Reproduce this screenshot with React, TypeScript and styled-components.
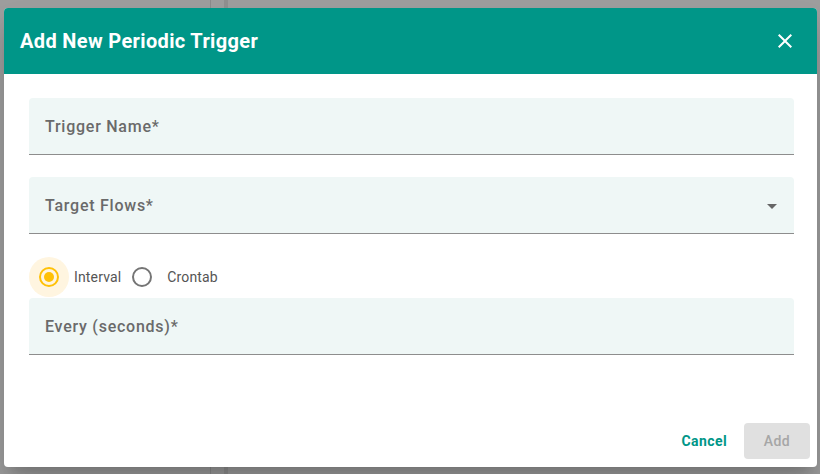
import React from "react";
import styled, { createGlobalStyle } from "styled-components";

const Global = createGlobalStyle`
  html, body { margin: 0; padding: 0; }
  body { font-family: Roboto, "Noto Sans", sans-serif; }
`;

const Page = styled.div`
  width: 820px;
  height: 474px;
  box-sizing: border-box;
  padding: 8px 3px 7px 4px;
  background:
    linear-gradient(to right, transparent 210px, #8c8c8c 210px, #8c8c8c 211px, transparent 211px, transparent 224px, #909090 224px, #909090 228px, transparent 228px),
    #9e9e9e;
  display: flex;
`;

const Dialog = styled.div`
  flex: 1;
  background: #fff;
  border-radius: 4px;
  overflow: hidden;
  display: flex;
  flex-direction: column;
  box-shadow: 0 11px 15px -7px rgba(0,0,0,0.2), 0 24px 38px 3px rgba(0,0,0,0.14);
`;

const Header = styled.div`
  height: 66px;
  flex: none;
  background: #009688;
  display: flex;
  align-items: center;
  justify-content: space-between;
  padding: 0 20px 0 16px;
  color: #fff;
`;

const Title = styled.h2`
  margin: 0;
  font-size: 20px;
  font-weight: 700;
  letter-spacing: 0.35px;
`;

const CloseButton = styled.button`
  border: 0;
  background: none;
  padding: 0;
  width: 24px;
  height: 24px;
  color: #fff;
  display: flex;
  align-items: center;
  justify-content: center;
  cursor: pointer;
`;

const Body = styled.div`
  flex: 1;
  padding: 24px 23px 0 25px;
  display: flex;
  flex-direction: column;
`;

const Field = styled.div<{ $mb?: number }>`
  height: 57px;
  box-sizing: border-box;
  background: #eff7f6;
  border-radius: 4px 4px 0 0;
  border-bottom: 1px solid #8d8d8d;
  display: flex;
  align-items: center;
  justify-content: space-between;
  padding: 0 16px;
  margin-bottom: ${(p) => p.$mb ?? 0}px;
`;

const Label = styled.span`
  font-size: 16px;
  font-weight: 500;
  color: #6a6a6a;
  letter-spacing: 0.75px;
`;

const Caret = styled.span`
  width: 0;
  height: 0;
  border-left: 5px solid transparent;
  border-right: 5px solid transparent;
  border-top: 5px solid #666;
  margin-right: 1px;
  margin-top: 2px;
`;

const RadioRow = styled.div`
  height: 44px;
  display: flex;
  align-items: center;
  margin-top: 21px;
  margin-bottom: -1px;
`;

const RadioItem = styled.label`
  display: flex;
  align-items: center;
  font-size: 14px;
  color: #555;
  letter-spacing: 0.15px;
  margin-right: 1px;
`;

const RadioWrap = styled.span<{ $checked?: boolean }>`
  width: 40px;
  height: 40px;
  border-radius: 50%;
  display: flex;
  align-items: center;
  justify-content: center;
  background: ${(p) => (p.$checked ? "#fff5e0" : "transparent")};
  margin-right: 5px;
`;

const RadioCircle = styled.span<{ $checked?: boolean }>`
  width: 20px;
  height: 20px;
  box-sizing: border-box;
  border-radius: 50%;
  border: 2px solid ${(p) => (p.$checked ? "#ffc107" : "#757575")};
  display: flex;
  align-items: center;
  justify-content: center;
  &::after {
    content: "";
    width: 10px;
    height: 10px;
    border-radius: 50%;
    background: #ffc107;
    display: ${(p) => (p.$checked ? "block" : "none")};
  }
`;

const Footer = styled.div`
  flex: none;
  display: flex;
  justify-content: flex-end;
  align-items: center;
  gap: 17px;
  padding: 0 7px 8px 0;
`;

const TextButton = styled.button`
  border: 0;
  background: none;
  font-family: inherit;
  font-size: 14px;
  font-weight: 700;
  color: #009688;
  padding: 0;
  height: 36px;
  letter-spacing: 0.4px;
`;

const DisabledButton = styled.button`
  border: 0;
  border-radius: 4px;
  background: #e0e0e0;
  color: #a6a6a6;
  font-family: inherit;
  font-size: 14px;
  font-weight: 500;
  width: 66px;
  height: 36px;
  letter-spacing: 0.4px;
`;

export default function App() {
  return (
    <>
      <Global />
      <Page>
        <Dialog>
          <Header>
            <Title>Add New Periodic Trigger</Title>
            <CloseButton aria-label="close">
              <svg width="24" height="24" viewBox="0 0 24 24" fill="currentColor">
                <path d="M19 6.41 17.59 5 12 10.59 6.41 5 5 6.41 10.59 12 5 17.59 6.41 19 12 13.41 17.59 19 19 17.59 13.41 12z" />
              </svg>
            </CloseButton>
          </Header>
          <Body>
            <Field $mb={22}>
              <Label>Trigger Name*</Label>
            </Field>
            <Field>
              <Label>Target Flows*</Label>
              <Caret />
            </Field>
            <RadioRow>
              <RadioItem>
                <RadioWrap $checked>
                  <RadioCircle $checked />
                </RadioWrap>
                Interval
              </RadioItem>
              <RadioItem>
                <RadioWrap>
                  <RadioCircle />
                </RadioWrap>
                Crontab
              </RadioItem>
            </RadioRow>
            <Field>
              <Label>Every (seconds)*</Label>
            </Field>
          </Body>
          <Footer>
            <TextButton>Cancel</TextButton>
            <DisabledButton disabled>Add</DisabledButton>
          </Footer>
        </Dialog>
      </Page>
    </>
  );
}
